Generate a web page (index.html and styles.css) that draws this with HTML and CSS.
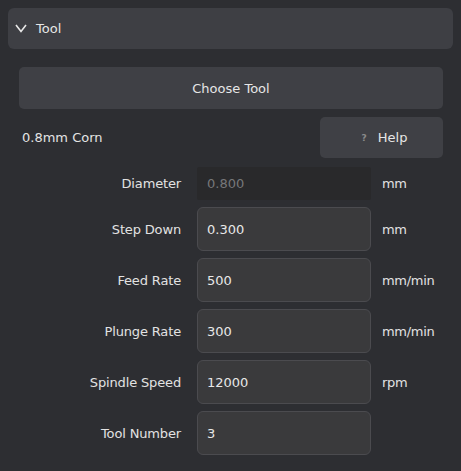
FILE: index.html
```html
<!DOCTYPE html>
<html>
<head>
<meta charset="utf-8">
<link rel="stylesheet" href="styles.css">
</head>
<body>
<div class="panel">
  <div class="header">
    <svg class="chev" width="12" height="9" viewBox="0 0 12 9"><polyline points="1,1 6,7.5 11,1" fill="none" stroke="#e8e8e8" stroke-width="1.6"/></svg>
    <span>Tool</span>
  </div>
  <div class="content">
    <button class="btn choose">Choose Tool</button>
    <div class="toolrow">
      <span class="toolname">0.8mm Corn</span>
      <button class="btn help"><span class="q">?</span>Help</button>
    </div>
    <div class="form">
      <label>Diameter</label><input class="field disabled" value="0.800" disabled><span class="unit">mm</span>
      <label>Step Down</label><input class="field" value="0.300"><span class="unit">mm</span>
      <label>Feed Rate</label><input class="field" value="500"><span class="unit">mm/min</span>
      <label>Plunge Rate</label><input class="field" value="300"><span class="unit">mm/min</span>
      <label>Spindle Speed</label><input class="field" value="12000"><span class="unit">rpm</span>
      <label>Tool Number</label><input class="field" value="3"><span class="unit"></span>
    </div>
  </div>
</div>
</body>
</html>
```
FILE: styles.css
```css
html, body {
  margin: 0;
  background: #2d2e32;
  font-family: "DejaVu Sans", sans-serif;
  font-size: 13px;
  color: #e4e4e4;
}
.panel {
  padding: 8px;
}
.header {
  height: 41px;
  background: #3e3f44;
  border-radius: 6px;
  display: flex;
  align-items: center;
  padding-left: 7px;
  gap: 9px;
}
.header span {
  font-size: 13px;
  color: #e6e6e6;
}
.content {
  padding: 18px 10px 0 11px;
}
.btn {
  background: #3f4045;
  border: none;
  border-radius: 5px;
  color: #e6e6e6;
  font-family: "DejaVu Sans", sans-serif;
  font-size: 13px;
  padding: 0;
}
.choose {
  display: block;
  width: 100%;
  height: 42px;
}
.toolrow {
  display: flex;
  justify-content: space-between;
  align-items: center;
  margin-top: 8px;
}
.toolname {
  padding-left: 3px;
}
.help {
  width: 123px;
  height: 41px;
  display: flex;
  align-items: center;
  justify-content: center;
  gap: 11px;
  padding-left: 6px;
}
.q {
  font-size: 9px;
  color: #8a8a8a;
  font-weight: bold;
}
.form {
  display: grid;
  grid-template-columns: 162px 174px auto;
  column-gap: 16px;
  row-gap: 7px;
  align-items: center;
  margin-top: 9px;
}
.form label {
  text-align: right;
  color: #e2e2e2;
  letter-spacing: -0.15px;
}
.field {
  box-sizing: border-box;
  width: 174px;
  height: 44px;
  background: #3a3a3c;
  border: 1px solid #4b4b4f;
  border-radius: 6px;
  color: #e8e8e8;
  font-family: "DejaVu Sans", sans-serif;
  font-size: 13px;
  padding: 0 9px;
  outline: none;
}
.field.disabled {
  height: 33px;
  background: #29292b;
  border-color: #29292b;
  border-radius: 2px;
  color: #77777a;
}
.unit {
  margin-left: -5px;
  color: #e2e2e2;
  letter-spacing: -0.3px;
}
```
